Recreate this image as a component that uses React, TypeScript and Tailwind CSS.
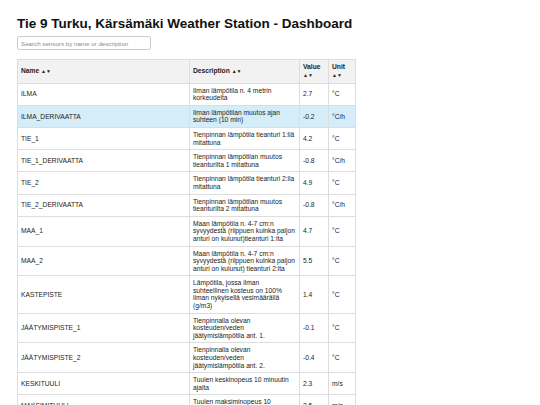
import React from "react";

type Row = { name: string; desc: string; value: string; unit: string; hl?: boolean };

const rows: Row[] = [
  { name: "ILMA", desc: "Ilman lämpötila n. 4 metrin korkeudelta", value: "2.7", unit: "°C" },
  { name: "ILMA_DERIVAATTA", desc: "Ilman lämpötilan muutos ajan suhteen (10 min)", value: "-0.2", unit: "°C/h", hl: true },
  { name: "TIE_1", desc: "Tienpinnan lämpötila tieanturi 1:llä mitattuna", value: "4.2", unit: "°C" },
  { name: "TIE_1_DERIVAATTA", desc: "Tienpinnan lämpötilan muutos tieanturilta 1 mitattuna", value: "-0.8", unit: "°C/h" },
  { name: "TIE_2", desc: "Tienpinnan lämpötila tieanturi 2:lla mitattuna", value: "4.9", unit: "°C" },
  { name: "TIE_2_DERIVAATTA", desc: "Tienpinnan lämpötilan muutos tieanturilta 2 mitattuna", value: "-0.8", unit: "°C/h" },
  { name: "MAA_1", desc: "Maan lämpötila n. 4-7 cm:n syvyydestä (riippuen kuinka paljon anturi on kulunut)tieanturi 1:lta", value: "4.7", unit: "°C" },
  { name: "MAA_2", desc: "Maan lämpötila n. 4-7 cm:n syvyydestä (riippuen kuinka paljon anturi on kulunut) tieanturi 2:lta", value: "5.5", unit: "°C" },
  { name: "KASTEPISTE", desc: "Lämpötila, jossa ilman suhteellinen kosteus on 100% ilman nykyisellä vesimäärällä (g/m3)", value: "1.4", unit: "°C" },
  { name: "JÄÄTYMISPISTE_1", desc: "Tienpinnalla olevan kosteuden/veden jäätymislämpötila ant. 1.", value: "-0.1", unit: "°C" },
  { name: "JÄÄTYMISPISTE_2", desc: "Tienpinnalla olevan kosteuden/veden jäätymislämpötila ant. 2.", value: "-0.4", unit: "°C" },
  { name: "KESKITUULI", desc: "Tuulen keskinopeus 10 minuutin ajalta", value: "2.3", unit: "m/s" },
  { name: "MAKSIMITUULI", desc: "Tuulen maksiminopeus 10 minuutin ajalta", value: "3.5", unit: "m/s" },
];

const cell = "border border-[#dddddd] px-[3px] py-[3px] text-[6.7px] leading-[7.6px] align-middle text-left";

export default function App() {
  return (
    <div
      className="min-h-[405px] bg-white px-[17px] pt-[16px] text-[#222] antialiased"
      style={{ fontFamily: "'Liberation Sans', Arial, sans-serif" }}
    >
      <h1 className="text-[13.5px] font-bold leading-[15.4px] text-[#111]">
        Tie 9 Turku, Kärsämäki Weather Station - Dashboard
      </h1>
      <input
        className="mt-[5px] block h-[14px] w-[134px] rounded-[2px] border border-[#cccccc] px-[3px] text-[6.2px] outline-none placeholder:text-[#8a8a8a]"
        placeholder="Search sensors by name or description"
      />
      <table className="mt-[9px] w-[338px] table-fixed border-collapse">
        <colgroup>
          <col className="w-[172px]" />
          <col className="w-[110px]" />
          <col className="w-[29px]" />
          <col className="w-[27px]" />
        </colgroup>
        <thead>
          <tr className="bg-[#f2f2f2]">
            <th className={`${cell} font-bold`}>Name <span className="text-[5px]">▲▼</span></th>
            <th className={`${cell} font-bold`}>Description <span className="text-[5px]">▲▼</span></th>
            <th className={`${cell} font-bold`}>Value <span className="text-[5px]">▲▼</span></th>
            <th className={`${cell} font-bold`}>Unit <span className="text-[5px]">▲▼</span></th>
          </tr>
        </thead>
        <tbody>
          {rows.map((r) => (
            <tr key={r.name} className={r.hl ? "bg-[#d5edf9]" : "bg-white"}>
              <td className={cell}>{r.name}</td>
              <td className={cell}>{r.desc}</td>
              <td className={cell}>{r.value}</td>
              <td className={cell}>{r.unit}</td>
            </tr>
          ))}
        </tbody>
      </table>
    </div>
  );
}
